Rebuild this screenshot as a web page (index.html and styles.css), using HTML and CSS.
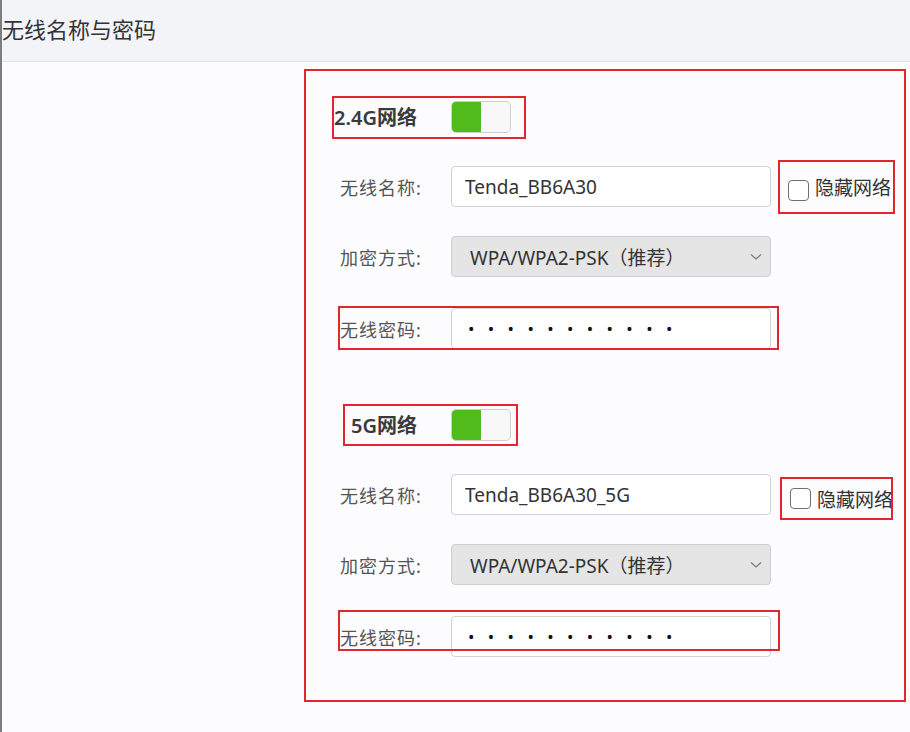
FILE: index.html
```html
<html>
<head>
  <meta charset="utf-8">
  <meta name="viewport" content="width=device-width, initial-scale=1.0">
  <link rel="stylesheet" href="styles.css">
</head>
<body>
<div class="page">

  <div class="page-header">
    <span class="page-title">无线名称与密码</span>
  </div>

  <div class="card">

    <!-- 2.4G -->
    <div class="band">
      <div class="row row-head">
        <span class="head-label">2.4G网络</span>
        <span class="switch"><span class="switch-on"></span></span>
        <span class="mark mark-24g"></span>
      </div>

      <div class="row">
        <span class="field-label">无线名称:</span>
        <input class="field" type="text" value="Tenda_BB6A30">
        <label class="hide-net">
          <span class="check"></span>
          <span class="hide-text">隐藏网络</span>
        </label>
      </div>

      <div class="row">
        <span class="field-label">加密方式:</span>
        <div class="field select">
          <span>WPA/WPA2-PSK（推荐）</span>
          <svg class="chev" width="12" height="8" viewBox="0 0 12 8"><path d="M1 1.5 L6 6 L11 1.5" fill="none" stroke="#777" stroke-width="1.2"/></svg>
        </div>
      </div>

      <div class="row row-pwd">
        <span class="field-label">无线密码:</span>
        <input class="field pwd" type="password" value="12345678901">
        <span class="mark mark-pwd1"></span>
      </div>
    </div>

    <!-- 5G -->
    <div class="band">
      <div class="row row-head">
        <span class="head-label">5G网络</span>
        <span class="switch"><span class="switch-on"></span></span>
        <span class="mark mark-5g"></span>
      </div>

      <div class="row">
        <span class="field-label">无线名称:</span>
        <input class="field" type="text" value="Tenda_BB6A30_5G">
        <label class="hide-net hide-net-5g">
          <span class="check"></span>
          <span class="hide-text">隐藏网络</span>
        </label>
      </div>

      <div class="row">
        <span class="field-label">加密方式:</span>
        <div class="field select">
          <span>WPA/WPA2-PSK（推荐）</span>
          <svg class="chev" width="12" height="8" viewBox="0 0 12 8"><path d="M1 1.5 L6 6 L11 1.5" fill="none" stroke="#777" stroke-width="1.2"/></svg>
        </div>
      </div>

      <div class="row row-pwd">
        <span class="field-label">无线密码:</span>
        <input class="field pwd" type="password" value="12345678901">
        <span class="mark mark-pwd2"></span>
      </div>
    </div>

  </div>
</div>
</body>
</html>
```

FILE: styles.css
```css
body {
  margin: 0;
  background: #fcfcfe;
  font-family: "Noto Sans", "Noto Sans CJK SC", sans-serif;
  color: #333;
}

.page {
  border-left: 2px solid #7d7d7d;
  min-height: 100vh;
  box-sizing: border-box;
}

.page-header {
  height: 61px;
  background: #f3f4f7;
  border-bottom: 1px solid #e2e3e7;
  display: flex;
  align-items: center;
}
.page-title {
  font-size: 22px;
  color: #333;
  font-family: "Noto Sans CJK SC", sans-serif;
  margin-top: -5px;
}

.card {
  margin: 7px 4px 0 302px;
  height: 633px;
  box-sizing: border-box;
  border: 2px solid #e2262d;
  padding-top: 25px;
  display: flex;
  flex-direction: column;
  gap: 55px;
}

.band {
  display: flex;
  flex-direction: column;
  gap: 29px;
}

.row {
  position: relative;
  display: flex;
  align-items: center;
  height: 41px;
  padding-left: 34px;
}
.row-pwd {
  margin-top: 2px;
}

.row-head {
  padding-left: 0;
}
.head-label {
  width: 111px;
  margin-right: 34px;
  text-align: right;
  font-size: 20px;
  font-weight: 600;
  color: #3a3a3a;
  white-space: nowrap;
}

.switch {
  width: 60px;
  height: 32px;
  box-sizing: border-box;
  border: 1px solid #cfcfcf;
  border-radius: 5px;
  background: #f8f8f8;
  overflow: hidden;
  display: flex;
}
.switch-on {
  width: 29px;
  background: #52bb1c;
}

.field-label {
  width: 111px;
  font-size: 18px;
  letter-spacing: 1px;
  color: #555;
  white-space: nowrap;
}

.field {
  width: 320px;
  height: 41px;
  box-sizing: border-box;
  border: 1px solid #d3d3d6;
  border-radius: 4px;
  background: #fff;
  font-family: "Noto Sans", "Noto Sans CJK SC", sans-serif;
  font-size: 19px;
  color: #333;
  padding: 0 13px;
  outline: none;
}

.select {
  display: flex;
  align-items: center;
  justify-content: space-between;
  background: #e5e5e6;
  border-color: #cfcfd2;
  padding: 0 8px 0 18px;
}
.chev {
  margin-top: 1px;
}

.pwd {
  padding-left: 16px;
  letter-spacing: 13.4px;
  font-size: 17px;
  color: #111;
}

.hide-net {
  margin-left: 7px;
  height: 54px;
  width: 117px;
  box-sizing: border-box;
  border: 2px solid #e2262d;
  display: flex;
  align-items: center;
  padding-left: 8px;
  gap: 6px;
  white-space: nowrap;
  overflow: hidden;
}
.hide-net-5g {
  margin-left: 9px;
  width: 113px;
  height: 43px;
  margin-top: 8px;
}
.check {
  width: 21px;
  height: 21px;
  flex: none;
  box-sizing: border-box;
  border: 1.5px solid #6f6f6f;
  border-radius: 4px;
  background: #fff;
  margin-top: 8px;
}
.hide-net-5g .check {
  margin-top: 0;
}
.hide-text {
  font-size: 19px;
  color: #333;
  font-family: "Noto Sans CJK SC", sans-serif;
}

/* annotation boxes drawn over the form */
.mark {
  position: absolute;
  box-sizing: border-box;
  border: 2px solid #e2262d;
  pointer-events: none;
}
.mark-24g {
  left: 26px;
  top: 0;
  width: 194px;
  height: 43px;
}
.mark-5g {
  left: 37px;
  top: 0;
  width: 175px;
  height: 42px;
}
.mark-pwd1 {
  left: 32px;
  top: -2px;
  width: 441px;
  height: 44px;
}
.mark-pwd2 {
  left: 32px;
  top: -6px;
  width: 442px;
  height: 41px;
}
```
